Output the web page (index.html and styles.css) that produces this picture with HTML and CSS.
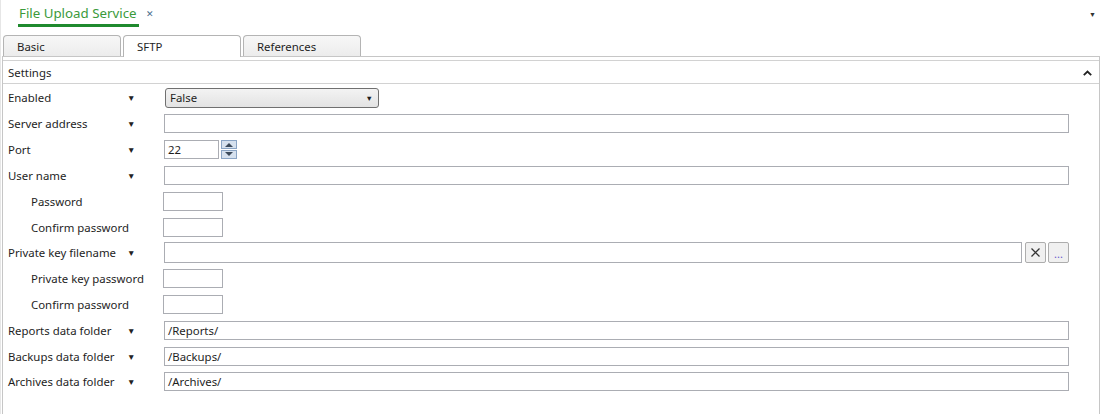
FILE: index.html
```html
<!DOCTYPE html>
<html lang="en">
<head>
    <meta charset="UTF-8">
    <title>File Upload Service</title>
    <link rel="stylesheet" href="styles.css">
</head>
<body>

<div class="doc-bar">
    <div class="doc-tab">
        <span class="doc-title">File Upload Service</span>
        <span class="doc-close">&#x2715;</span>
    </div>
    <span class="doc-menu">&#x25BC;</span>
</div>

<div class="tabstrip">
    <div class="tab">Basic</div>
    <div class="tab active">SFTP</div>
    <div class="tab">References</div>
</div>

<div class="panel">
    <div class="group-header">
        <span>Settings</span>
        <svg class="collapse" width="9" height="6" viewBox="0 0 9 6"><path d="M0.8 5.2 L4.5 1.5 L8.2 5.2" fill="none" stroke="#222" stroke-width="1.8"/></svg>
    </div>

    <div class="row first">
        <span class="label">Enabled</span><span class="arrow">&#x25BC;</span>
        <div class="combo"><span>False</span><span class="combo-arrow">&#x25BC;</span></div>
    </div>
    <div class="row">
        <span class="label">Server address</span><span class="arrow">&#x25BC;</span>
        <div class="input wide"></div>
    </div>
    <div class="row">
        <span class="label">Port</span><span class="arrow">&#x25BC;</span>
        <div class="input port">22</div>
        <div class="spinner">
            <span class="spin up"></span>
            <span class="spin down"></span>
        </div>
    </div>
    <div class="row">
        <span class="label">User name</span><span class="arrow">&#x25BC;</span>
        <div class="input wide"></div>
    </div>
    <div class="row">
        <span class="label sub">Password</span><span class="arrow"></span>
        <div class="input small"></div>
    </div>
    <div class="row">
        <span class="label sub">Confirm password</span><span class="arrow"></span>
        <div class="input small"></div>
    </div>
    <div class="row">
        <span class="label">Private key filename</span><span class="arrow">&#x25BC;</span>
        <div class="input wide tall"></div>
        <div class="btn">
            <svg width="9" height="9" viewBox="0 0 9 9"><path d="M0.5 0.5 L8.5 8.5 M8.5 0.5 L0.5 8.5" stroke="#333" stroke-width="1.3"/></svg>
        </div>
        <div class="btn dots">...</div>
    </div>
    <div class="row">
        <span class="label sub">Private key password</span><span class="arrow"></span>
        <div class="input small"></div>
    </div>
    <div class="row">
        <span class="label sub">Confirm password</span><span class="arrow"></span>
        <div class="input small"></div>
    </div>
    <div class="row">
        <span class="label">Reports data folder</span><span class="arrow">&#x25BC;</span>
        <div class="input wide">/Reports/</div>
    </div>
    <div class="row">
        <span class="label">Backups data folder</span><span class="arrow">&#x25BC;</span>
        <div class="input wide">/Backups/</div>
    </div>
    <div class="row">
        <span class="label">Archives data folder</span><span class="arrow">&#x25BC;</span>
        <div class="input wide">/Archives/</div>
    </div>
</div>

</body>
</html>
```

FILE: styles.css
```css
body {
    font-family: "Noto Sans", "Open Sans", sans-serif;
    font-size: 11.4px;
    color: #1e1e1e;
    margin: 0;
    padding: 0;
    background-color: white;
    height: 414px;
    overflow: hidden;
    border-left: 1px solid #e6e6e6;
    box-sizing: border-box;
}
.doc-bar {
    height: 34px;
    display: flex;
    align-items: flex-start;
    justify-content: space-between;
}
.doc-tab {
    margin-left: 17px;
    margin-top: 3px;
    display: flex;
    align-items: center;
    gap: 7px;
}
.doc-title {
    color: #3b9a3b;
    font-size: 13.3px;
    line-height: 20px;
    padding: 0 2px 1px 1px;
    border-bottom: 3px solid #1f8a2e;
}
.doc-close {
    color: #4a6d8c;
    font-size: 9px;
    margin-top: -3px;
}
.doc-menu {
    font-size: 7px;
    margin: 10px 6px 0 0;
    color: #333;
}
.tabstrip {
    display: flex;
    gap: 2px;
    padding-left: 2px;
    height: 22px;
}
.tab {
    width: 118px;
    height: 21px;
    border: 1px solid #b4b4b4;
    border-bottom: none;
    border-radius: 4px 4px 0 0;
    background: linear-gradient(#f7f7f7, #ececec);
    padding-left: 13px;
    box-sizing: border-box;
    line-height: 21px;
    margin-top: 1px;
}
.tab.active {
    background: white;
    height: 22px;
}
.panel {
    margin-left: 1px;
    margin-right: 2px;
    border-top: 1px solid #c6c6c6;
    border-left: 1px solid #c6c6c6;
    border-right: 1px solid #c6c6c6;
    height: 357px;
}
.group-header {
    margin-top: 3px;
    height: 22px;
    border-top: 1px solid #d2d2d2;
    border-bottom: 1px solid #d2d2d2;
    display: flex;
    align-items: center;
    justify-content: space-between;
    padding: 0 7px 0 5px;
}
.collapse {
    margin-top: 1px;
}
.row {
    height: 25.8px;
    display: flex;
    align-items: center;
}
.row.first {
    height: 27px;
}
.label {
    width: 119px;
    padding-left: 5px;
    white-space: nowrap;
}
.label.sub {
    padding-left: 28px;
    width: 96px;
}
.arrow {
    width: 35px;
    font-size: 8.5px;
    color: #222;
}
.combo {
    width: 214px;
    height: 20px;
    box-sizing: border-box;
    border: 1px solid #707070;
    border-radius: 3px;
    background: linear-gradient(#f3f3f3, #e3e3e3);
    display: flex;
    align-items: center;
    justify-content: space-between;
    padding: 0 5px 0 4px;
    margin-left: 3px;
}
.combo-arrow {
    font-size: 7.5px;
}
.input {
    height: 19px;
    box-sizing: border-box;
    border: 1px solid #abadb3;
    line-height: 17px;
    padding-left: 3px;
    margin-left: 2px;
}
.input.wide {
    flex: 1;
    margin-right: 30px;
}
.input.tall {
    height: 21px;
    margin-right: 3px;
}
.input.small {
    width: 60px;
    margin-left: 1px;
}
.input.port {
    width: 55px;
}
.spinner {
    margin-left: 2px;
    width: 16px;
    height: 19px;
    display: flex;
    flex-direction: column;
    gap: 1px;
}
.spin {
    flex: 1;
    background: #d6e1ee;
    border: 1px solid #8aa4c4;
    position: relative;
}
.spin::after {
    content: "";
    position: absolute;
    left: 3px;
    top: 2px;
    border-left: 4px solid transparent;
    border-right: 4px solid transparent;
}
.spin.up::after {
    border-bottom: 4px solid #3c4a5a;
}
.spin.down::after {
    top: 1px;
    border-top: 4px solid #3c4a5a;
}
.btn {
    width: 21px;
    height: 21px;
    box-sizing: border-box;
    border: 1px solid #adadad;
    border-radius: 2px;
    background: #f0f0f0;
    display: flex;
    align-items: center;
    justify-content: center;
    font-size: 11px;
    margin-right: 2px;
}
.btn.dots {
    margin-right: 30px;
    align-items: flex-end;
    padding-bottom: 4px;
    line-height: 8px;
    color: #6a5acd;
}
```
